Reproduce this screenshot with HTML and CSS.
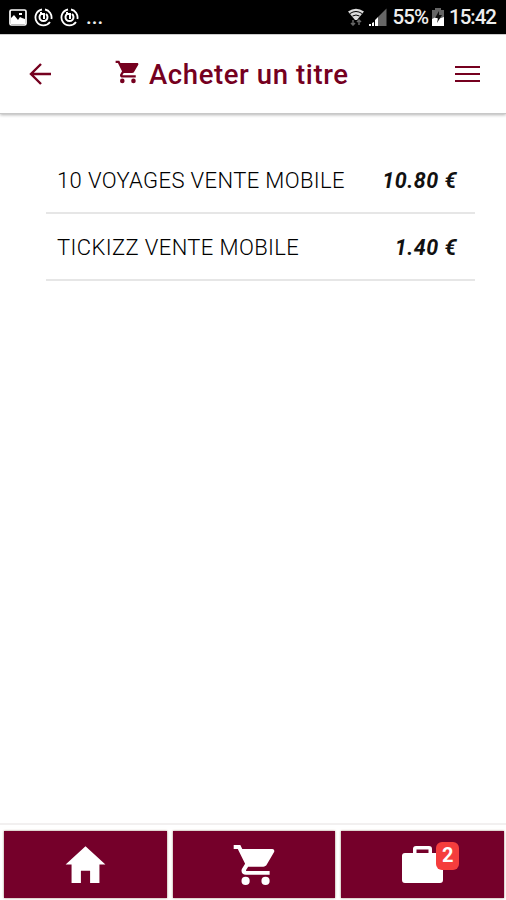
FILE: index.html
```html
<!DOCTYPE html>
<html lang="fr">
<head>
    <meta charset="UTF-8">
    <meta name="viewport" content="width=device-width, initial-scale=1.0">
    <title>Acheter un titre</title>
    <link rel="stylesheet" href="styles.css">
</head>
<body>

    <!-- Shared cart shape -->
    <svg class="symbols" width="0" height="0">
        <symbol id="cart" viewBox="0 0 512 512">
            <path d="M48 51v42h42l75 151-32 51c-3 5-5 13-5 20 0 28 19 42 45 42h243v-40H178c-3 0-5-2-5-5 0-1 2-5 2-5l21-33h155c15 0 29-8 36-22l75-129c1-2 2-6 2-10 0-11-9-20-21-20H136l-20-42H48z"/>
            <circle cx="170" cy="419" r="42"/>
            <circle cx="374" cy="419" r="42"/>
        </symbol>
    </svg>

    <!-- Status Bar -->
    <div class="status-bar">
        <div class="status-left">
            <svg width="18" height="17" viewBox="0 0 18 17">
                <rect x="1" y="1" width="16" height="15" rx="1.5" fill="none" stroke="#fff" stroke-width="1.7"/>
                <path d="M2 14V9l3-3 4 5 2-3 2 1 3 1v5H2z" fill="#fff"/>
                <path d="M10 4h3v2h-3z" fill="#fff"/>
            </svg>
            <svg width="19" height="19" viewBox="0 0 19 19" fill="none" stroke="#fff">
                <path d="M8 1.5A8 8 0 1 0 16 14M11 1.5A8 8 0 0 1 17.4 11" stroke-width="1.8"/>
                <path d="M7 6a4 4 0 1 0 5 0M7 6V4M7 6h3v5" stroke-width="2"/>
            </svg>
            <svg width="19" height="19" viewBox="0 0 19 19" fill="none" stroke="#fff">
                <path d="M8 1.5A8 8 0 1 0 16 14M11 1.5A8 8 0 0 1 17.4 11" stroke-width="1.8"/>
                <path d="M7 6a4 4 0 1 0 5 0M7 6V4M7 6h3v5" stroke-width="2"/>
            </svg>
            <span class="dots">...</span>
        </div>
        <div class="status-right">
            <svg width="16" height="18" viewBox="0 0 16 18">
                <path d="M0 3.5Q8-2 16 3.5L9 12H7z" fill="#ddd"/>
                <path d="M2 5.5q6-4 12 0M4.5 8q3.5-2 7 0" fill="none" stroke="#000"/>
                <path d="M5 12v5M3 15l2 2 2-2M11 17v-5M9 14l2-2 2 2" fill="none" stroke="#666" stroke-width="1.5"/>
            </svg>
            <svg class="signal" width="18" height="18" viewBox="0 0 18 18">
                <path d="M9 9l8.5-8.5V18H9z" fill="#666"/>
                <path d="M0 18v-2h2v2zM3 18v-3l2-1v4zM6 18v-6l3-3v9z" fill="#fff"/>
            </svg>
            <span class="battery-level">55%</span>
            <svg class="battery" width="12" height="18" viewBox="0 0 12 18">
                <path d="M3 2V0h6v2h3v9H0V2z" fill="#666"/>
                <path d="M0 11l4-2 2 2 6-2v9H0z" fill="#fff"/>
                <path d="M7 3L3 10h3l-1 5 5-8H7z" fill="#111"/>
            </svg>
            <span class="clock">15:42</span>
        </div>
    </div>

    <!-- Header -->
    <header class="header">
        <svg class="back" width="22" height="22" viewBox="0 0 22 22">
            <path d="M22 11H2M12 1L2 11l10 10" fill="none" stroke="currentColor" stroke-width="2.4"/>
        </svg>
        <h1 class="title">
            <svg class="title-cart" width="28" height="28"><use href="#cart"/></svg>
            <span>Acheter un titre</span>
        </h1>
        <div class="menu-icon">
            <span></span>
            <span></span>
            <span></span>
        </div>
    </header>

    <!-- Ticket List -->
    <main class="tickets">
        <div class="ticket">
            <span class="name">10 VOYAGES VENTE MOBILE</span>
            <span class="price">10.80 €</span>
        </div>
        <div class="ticket">
            <span class="name">TICKIZZ VENTE MOBILE</span>
            <span class="price">1.40 €</span>
        </div>
    </main>

    <!-- Bottom Tabs -->
    <nav class="tabs">
        <a class="tab">
            <svg width="49" height="49" viewBox="0 0 512 512"><path d="M208 448V320h96v128h97.6V256H464L256 64 48 256h62.4v192z"/></svg>
        </a>
        <a class="tab">
            <svg width="50" height="50"><use href="#cart"/></svg>
        </a>
        <a class="tab">
            <span class="bag">
                <svg width="49" height="49" viewBox="0 0 49 49">
                    <path d="M7 13h8V9q0-3 3-3h13q3 0 3 3v4h8q3 0 3 3v24q0 3-3 3H7q-3 0-3-3V16q0-3 3-3zm11.5 0h12V9.5h-12z"/>
                </svg>
                <span class="badge">2</span>
            </span>
        </a>
    </nav>

</body>
</html>
```
FILE: styles.css
```css
/* General Styles */
* {
    margin: 0;
    padding: 0;
    box-sizing: border-box;
}
body {
    height: 900px;
    display: flex;
    flex-direction: column;
    background-color: #fff;
    color: #111;
    font-family: Roboto, sans-serif;
    overflow: hidden;
}
svg {
    display: block;
    flex: none;
}
.symbols {
    position: absolute;
}

/* Status Bar */
.status-bar {
    flex: none;
    height: 34px;
    padding: 0 10px 0 9px;
    display: flex;
    justify-content: space-between;
    align-items: center;
    background: #000;
    color: #eee;
    font-size: 20.5px;
    font-weight: 500;
}
.status-left,
.status-right {
    display: flex;
    align-items: center;
}
.status-left {
    gap: 7px;
}
.status-right {
    letter-spacing: -1px;
}
.signal {
    margin-left: 5px;
}
.battery-level {
    margin-left: 6px;
}
.battery {
    margin-left: 4px;
}
.clock {
    margin-left: 5px;
}

/* Header */
.header {
    flex: none;
    height: 80px;
    padding: 0 26px 0 29px;
    display: flex;
    align-items: center;
    color: #75001f;
    border-top: 1px solid #ccc;
    border-bottom: 1px solid #c8c8c8;
    box-shadow: 0 1px 3px rgba(0, 0, 0, 0.3);
}
.title {
    margin-left: 62px;
    display: flex;
    align-items: center;
    font-size: 27.5px;
    font-weight: 500;
    letter-spacing: 0.6px;
    white-space: nowrap;
}
.title-cart {
    margin: 0 8px 4px 0;
    fill: currentColor;
}
.menu-icon {
    margin-left: auto;
    width: 25px;
    display: grid;
    gap: 5px;
}
.menu-icon span {
    height: 2px;
    background: #75001f;
}

/* Ticket List */
.tickets {
    flex: 1;
    padding: 33px 31px 0 46px;
}
.ticket {
    height: 67px;
    padding: 1px 18px 0 11px;
    display: flex;
    justify-content: space-between;
    align-items: center;
    border-bottom: 2px solid #e6e6e6;
    white-space: nowrap;
}
.name {
    font-size: 22px;
    font-weight: 300;
    letter-spacing: 0.38px;
    color: #000;
}
.price {
    font-size: 21.5px;
    font-weight: 700;
    font-style: italic;
    letter-spacing: 0.5px;
}

/* Bottom Tabs */
.tabs {
    flex: none;
    height: 77px;
    padding: 6px 2px 2px 4px;
    display: grid;
    grid-template-columns: repeat(3, 1fr);
    gap: 6px;
    border-top: 2px solid #f2f0f0;
}
.tab {
    display: flex;
    justify-content: center;
    align-items: center;
    background: #75002a;
    box-shadow: 0 0 2px #a08070;
    fill: #fff;
}
.bag {
    position: relative;
}
.badge {
    position: absolute;
    top: 2px;
    left: 38px;
    width: 23px;
    height: 28px;
    border-radius: 6px;
    background: #f53d3d;
    color: #fff;
    font-size: 20px;
    font-weight: 700;
    line-height: 26px;
    text-align: center;
}
```
